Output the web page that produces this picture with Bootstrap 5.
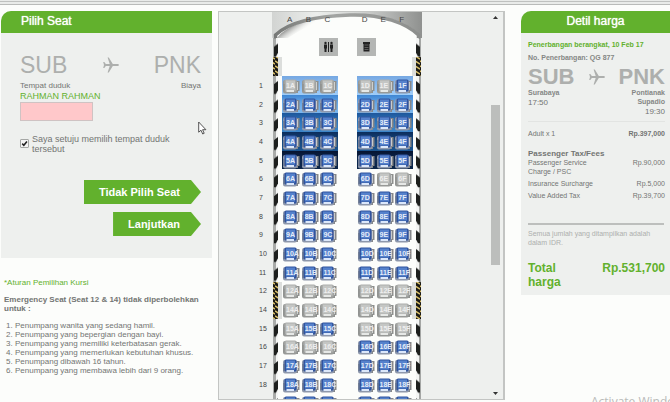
<!DOCTYPE html>
<html lang="id">
<head>
<meta charset="utf-8">
<meta name="viewport" content="width=device-width, initial-scale=1">
<title>Pilih Seat</title>
<link href="https://cdn.jsdelivr.net/npm/bootstrap@5.3.0/dist/css/bootstrap.min.css" rel="stylesheet">
<style>
  :root { --brand: #62b12d; --panel: #eef0ee; --ink: #737573; --soft: #adafad; }
  body { font-family: "Liberation Sans", Arial, sans-serif; font-size: 8px; line-height: 9px; color: var(--ink); background: #fcfdfb; height: 100vh; }
  .topbar { height: 5px; flex: none; background: #e9ebe9; border-bottom: 1px solid #b9bbb9; }
  .topbar::before { content: ""; display: block; height: 2px; border-bottom: 1px solid #bfc1bf; }
  .layout { display: grid; grid-template-columns: 211fr 287fr 159fr; gap: 6px; padding: 6px 0 2px 1px; min-height: 0; }
  .layout > * { min-width: 0; min-height: 0; }
  .panel { background: var(--panel); border-top-left-radius: 10px; overflow: hidden; }
  .panel-title { background: var(--brand); color: #fff; font-size: 12px; line-height: 20px; height: 22px; margin: 0; font-weight: 400; text-shadow: 0 0 1px #fff; }
  .green { color: var(--brand); }
  .route { color: var(--soft); font-size: 23px; line-height: 24px; }
  .route svg { width: 16px; height: 16px; }
  .pick { padding: 20px 11px 22px 19px; }
  .pax { font-size: 9px; line-height: 12px; }
  .seat-input { width: 73px; height: 19px; background: #ffc8ca; border: 1px solid #cfc3c3; border-radius: 0; padding: 0 4px; font-size: 9px; display: block; }
  .agree { font-size: 9px; line-height: 10px; margin: 13px 0 26px; padding-right: 30px; }
  .agree input { appearance: none; width: 9px; height: 9px; margin: 5px 3px 0 0; border: 1px solid #a5a7a5; border-radius: 1px; flex: none;
    background: #f4f4f4 url("data:image/svg+xml,%3Csvg xmlns='http://www.w3.org/2000/svg' viewBox='0 0 8 8'%3E%3Cpath d='M1.4 4.2 3.2 6 6.8 1.6' fill='none' stroke='%23222' stroke-width='1.8'/%3E%3C/svg%3E") center/contain no-repeat; }
  .arrow-btn { border: 0; background: var(--brand); color: #fff; font-weight: 700; font-size: 11px; line-height: 24px; padding: 0 21px 0 15px; clip-path: polygon(0 0, calc(100% - 10px) 0, 100% 50%, calc(100% - 10px) 100%, 0 100%); }
  .rules { padding: 20px 4px 0 3px; }
  .rules ol { padding-left: 11px; }
  .map { background: var(--panel); border: 1px solid #c3c5c3; border-right-width: 2px; overflow: hidden; }
  .deck { overflow: hidden; }
  .fuselage { position: absolute; left: 53px; top: 0; width: 150px; height: 388px; }
  .plan { position: relative; width: 194px; }
  .seatrow { display: grid; grid-template-columns: 63px repeat(7, 1fr); }
  .heads { padding-top: 3px; height: 25px; font-size: 8px; line-height: 10px; color: #444; }
  .heads span { padding-left: 5px; }
  .amen { height: 39px; }
  .amen svg { width: 19px; height: 19px; }
  .seats { display: grid; grid-auto-rows: 1fr; height: 336px; }
  .rownum { padding: 5px 0 0 40px; font-size: 7px; line-height: 10px; color: #444; }
  .seat { position: relative; border: 0; padding: 0; background: none; font-size: 7px; line-height: 8px; font-weight: 700; color: #e6edf8; white-space: nowrap; }
  .seat svg { position: absolute; left: 0; top: 3px; width: 18px; height: 15px; }
  .seat span { position: absolute; left: 4px; top: 6px; }
  .seat:disabled { color: #eee; }
  .tone1 { background: linear-gradient(#76a8e2, #8fc0f3 60%, #a0cdf8); }
  .tone2 { background: linear-gradient(#3f86d3, #69a9e8 50%, #7cb7ee); }
  .tone3 { background: linear-gradient(#1d569b, #2f77bd 50%, #3d86c9); }
  .tone4 { background: linear-gradient(#0c2d5c, #17497f 50%, #1c5590); }
  .tone5 { background: linear-gradient(#061431, #0d2850 50%, #0b2448); }
  .scroller { width: 13px; padding: 3px 3px 3px 0; }
  .scroller svg { width: 5px; height: 4px; }
  .thumb { width: 9px; height: 160px; background: #bcbebc; margin-top: 86px; }
  .fare { margin-left: 10px; }
  .fare-body { padding: 7px 5px 6px 7px; font-size: 7px; }
  .fare .route { font-size: 22px; line-height: 22px; font-weight: 700; }
  .place { font-weight: 700; color: #858785; }
  .clock { font-size: 8px; line-height: 12px; }
  .party { border-top: 1px solid #e2e4e2; padding-top: 7px; margin-top: 3px; }
  .fees { width: 100%; }
  .fees caption { caption-side: top; font-size: 8px; line-height: 9px; font-weight: 700; color: var(--ink); padding: 11px 0 0; }
  .fees td, .fees th { padding: 0 0 3px; vertical-align: top; font-weight: 400; }
  .note { border-top: 2px solid #bdbfbd; color: var(--soft); padding-top: 4px; margin: 20px 1px 0 0; }
  .total { font-size: 12px; line-height: 14px; margin-top: 14px; }
  .pointer { position: absolute; left: 198px; top: 121px; width: 9px; height: 14px; }
  .watermark { position: absolute; left: 591px; top: 394px; font: 12px/16px "Open Sans", sans-serif; color: #b9bbb9; white-space: nowrap; }
</style>
<script src="https://cdn.jsdelivr.net/npm/bootstrap@5.3.0/dist/js/bootstrap.bundle.min.js"></script>
</head>
<body class="d-flex flex-column overflow-hidden position-relative">
<svg class="d-none">
  <symbol id="free" viewBox="0 0 18 15">
    <path d="M14 2h3.500v10H16v2h-2z" fill="#85878a"/><path d="M15.500 3v8" stroke="#c9cbcd"/>
    <rect x="1" y="1" width="14" height="13.500" rx="2" fill="#8e98ac"/>
    <rect x="2.500" y=".5" width="12" height="12" rx="1.500" fill="#30549f"/>
    <rect x="4" y="1.500" width="9" height="9" fill="#5581cc"/>
    <path d="M2 5v7" stroke="#596682"/><path d="M4.500 12h7.500" stroke="#dbe7fa" stroke-width="2"/>
  </symbol>
  <symbol id="taken" viewBox="0 0 18 15">
    <path d="M14 2h3.500v10H16v2h-2z" fill="#8e908e"/><path d="M15.500 3v8" stroke="#cfd1cf"/>
    <rect x="1" y="1" width="14" height="13.500" rx="2" fill="#979997"/>
    <rect x="2.500" y=".5" width="12" height="12" rx="1.500" fill="#acaeac"/>
    <rect x="4" y="1.500" width="9" height="9" fill="#c4c6c4"/>
    <path d="M2 5v7" stroke="#8a8c8a"/><path d="M4.500 12h7.500" stroke="#e6e8e6" stroke-width="2"/>
  </symbol>
  <symbol id="plane" viewBox="0 0 16 16">
    <path d="M16 8c0 .7-1 1-2 1H9.800L5.800 15.500H4.600L6.700 9H2.800L1.300 11H.2L1 8 .2 5h1.100L2.800 7h3.900L4.600.5h1.200L9.800 7H14c1 0 2 .3 2 1z" fill="#adafad"/>
  </symbol>
</svg>

<div class="topbar"></div>
<main class="layout flex-grow-1">
  <div>
    <section class="panel">
      <h1 class="panel-title ps-3"><span class="ps-1">Pilih Seat</span></h1>
      <form class="pick">
        <div class="route d-flex justify-content-between align-items-center">
          <span>SUB</span><svg aria-hidden="true"><use href="#plane"/></svg><span>PNK</span>
        </div>
        <div class="d-flex justify-content-between pt-1"><label for="seatNo">Tempat duduk</label><span>Biaya</span></div>
        <div class="pax green">RAHMAN RAHMAN</div>
        <input class="seat-input" id="seatNo" type="text">
        <div class="agree d-flex align-items-start">
          <input type="checkbox" id="agree" checked>
          <label for="agree">Saya setuju memilih tempat duduk tersebut</label>
        </div>
        <div class="d-flex flex-column align-items-end">
          <button type="button" class="arrow-btn">Tidak Pilih Seat</button>
          <button type="button" class="arrow-btn mt-2">Lanjutkan</button>
        </div>
      </form>
    </section>
    <section class="rules">
      <p class="green mb-2">*Aturan Pemilihan Kursi</p>
      <p class="fw-bold mb-2">Emergency Seat (Seat 12 &amp; 14) tidak diperbolehkan untuk :</p>
      <ol class="mb-0">
        <li>Penumpang wanita yang sedang hamil.</li>
        <li>Penumpang yang bepergian dengan bayi.</li>
        <li>Penumpang yang memiliki keterbatasan gerak.</li>
        <li>Penumpang yang memerlukan kebutuhan khusus.</li>
        <li>Penumpang dibawah 16 tahun.</li>
        <li>Penumpang yang membawa lebih dari 9 orang.</li>
      </ol>
    </section>
  </div>

  <section class="map d-flex" aria-label="Peta kursi">
    <div class="deck flex-grow-1">
      <div class="plan">
        <svg class="fuselage" viewBox="272 12 150 388" aria-hidden="true">
          <defs>
            <linearGradient id="sky"><stop offset="0" stop-color="#d2d4d2"/><stop offset=".3" stop-color="#eceeec"/><stop offset=".6" stop-color="#d0d2d0"/><stop offset="1" stop-color="#8f918f"/></linearGradient>
            <linearGradient id="rim"><stop offset="0" stop-color="#777977"/><stop offset=".4" stop-color="#a2a4a2"/><stop offset="1" stop-color="#8c8e8c"/></linearGradient>
            <linearGradient id="shade" gradientUnits="userSpaceOnUse" x1="284" y1="24" x2="294" y2="38"><stop offset="0" stop-color="#111"/><stop offset="1" stop-color="#fcfdfb" stop-opacity="0"/></linearGradient>
            <pattern id="railL" x="272" y="76" width="7" height="18.670" patternUnits="userSpaceOnUse"><path d="M1 0h5v19H1z" fill="#a9aba9"/><path d="M4 0h2v19H4z" fill="#f4f5f4"/><path d="M2 8 6 5v9l-2 4H2z" fill="#1d1f1d"/></pattern>
            <pattern id="railR" x="415" y="76" width="7" height="18.670" patternUnits="userSpaceOnUse"><path d="M1 0h5v19H1z" fill="#f4f5f4"/><path d="M4 0h2v19H4z" fill="#a4a6a4"/><path d="M5 8 1 5v9l2 4h2z" fill="#1d1f1d"/></pattern>
            <pattern id="exit" width="5" height="5" patternUnits="userSpaceOnUse"><path d="M0 0h5v5H0z" fill="#1b1a16"/><path d="M0 1 5 4" stroke="#dcc26a" stroke-width="1.500"/></pattern>
          </defs>
          <path d="M272 12h150v26H272z" fill="url(#sky)"/>
          <path d="M275 400V36C290 20 318 15 350 14s60 8 70 22v364z" fill="#fcfdfb"/>
          <path d="M277 38C288 24 312 18 338 16 318 21 298 31 288 38z" fill="url(#shade)"/>
          <path d="M275.500 38v-3C290 21 318 16 350 15s56 8 68.500 20v4" fill="none" stroke="url(#rim)" stroke-width="3.500"/>
          <path d="M272 38h7v362h-7z" fill="url(#railL)"/><path d="M415 38h7v362h-7z" fill="url(#railR)"/>
          <path d="M278 57h4v19h-4zM412 57h4v19h-4zM278 282h4v37h-4zM412 282h4v37h-4z" fill="#dcdedc"/>
          <path d="M273 57h5v19h-5zM416 57h5v19h-5zM273 282h5v37h-5zM416 282h5v37h-5z" fill="url(#exit)"/>
        </svg>
        <div class="seatrow heads position-relative"><i></i><span>A</span><span>B</span><span>C</span><i></i><span>D</span><span>E</span><span>F</span></div>
        <div class="seatrow amen position-relative">
          <i></i><i></i><i></i>
          <svg viewBox="0 0 19 19" role="img" aria-label="Toilet"><path d="M0 1h19v18H0z" fill="#b4b6b4"/><g fill="#222"><circle cx="6.500" cy="6" r="1.200"/><path d="M5 7.500h3v4H7.500V15h-2v-3.500H5z"/><path d="M9 5h1v10H9z"/><circle cx="12.500" cy="6" r="1.200"/><path d="M11 7.500h3v4h-.5V15h-2v-3.500H11z"/></g></svg>
          <i></i>
          <svg viewBox="0 0 19 19" role="img" aria-label="Dapur"><path d="M0 1h19v18H0z" fill="#b4b6b4"/><path d="M6 5h7v2h-.5v7.500h-6V7H6z" fill="#222"/><path d="M7.500 8h4M7.500 10.500h4M7.500 12.500h4" stroke="#777" stroke-width=".7"/></svg>
        </div>
        <div class="seats position-relative" id="seats"></div>
      </div>
    </div>
    <div class="scroller d-flex flex-column align-items-center">
      <svg viewBox="0 0 5 4" aria-hidden="true"><path d="M0 4 2.500 1 5 4z" fill="#333"/></svg>
      <div class="thumb"></div>
      <svg class="mt-auto" viewBox="0 0 5 4" aria-hidden="true"><path d="M0 0 2.500 3 5 0z" fill="#333"/></svg>
    </div>
  </section>

  <div>
    <section class="panel fare">
      <h2 class="panel-title text-center">Detil harga</h2>
      <div class="fare-body">
        <div class="green fw-bold">Penerbangan berangkat, 10 Feb 17</div>
        <div class="place mt-1">No. Penerbangan: QG 877</div>
        <div class="route d-flex justify-content-between align-items-center mt-1">
          <span>SUB</span><svg aria-hidden="true"><use href="#plane"/></svg><span>PNK</span>
        </div>
        <div class="d-flex justify-content-between">
          <div><div class="place">Surabaya</div><div class="clock">17:50</div></div>
          <div class="text-end"><div class="place">Pontianak<br>Supadio</div><div class="clock">19:30</div></div>
        </div>
        <div class="party d-flex justify-content-between"><span>Adult x 1</span><b>Rp.397,000</b></div>
        <table class="fees">
          <caption>Passenger Tax/Fees</caption>
          <tbody>
            <tr><th scope="row">Passenger Service<br>Charge / PSC</th><td class="text-end">Rp.90,000</td></tr>
            <tr><th scope="row">Insurance Surcharge</th><td class="text-end">Rp.5,000</td></tr>
            <tr><th scope="row">Value Added Tax</th><td class="text-end">Rp.39,700</td></tr>
          </tbody>
        </table>
        <p class="note mb-0">Semua jumlah yang ditampilkan adalah<br>dalam IDR.</p>
        <div class="total green fw-bold d-flex justify-content-between"><span>Total<br>harga</span><span>Rp.531,700</span></div>
      </div>
    </section>
  </div>
</main>

<svg class="pointer" viewBox="0 0 9 14" aria-hidden="true"><path d="M.7 1v10.200l2.300-2 1.700 3.800 1.500-.7-1.600-3.600h3.300z" fill="#fff" stroke="#444" stroke-width=".9"/></svg>
<div class="watermark">Activate Windows</div>

<script>
  const rows = [1,2,3,4,5,6,7,8,9,10,11,12,14,15,16,17,18];
  const taken = { 1: "ABCDE", 6: "EF", 12: "ABCDEF", 14: "ABCDEF", 15: "ADEF", 16: "ABC" };
  const seat = (row, col) => {
    const off = (taken[row] || "").includes(col);
    return `<button type="button" class="seat tone${row}"${off ? " disabled" : ""}><svg aria-hidden="true"><use href="#${off ? "taken" : "free"}"/></svg><span>${row ? row + col : ""}</span></button>`;
  };
  // The last row only peeks in at the bottom edge, so its seats carry no label.
  document.getElementById("seats").innerHTML = [...rows, ""].map(r =>
    `<div class="seatrow"><div class="rownum">${r}</div>${[..."ABC"].map(c => seat(r, c)).join("")}<i></i>${[..."DEF"].map(c => seat(r, c)).join("")}</div>`
  ).join("");
</script>
</body>
</html>
